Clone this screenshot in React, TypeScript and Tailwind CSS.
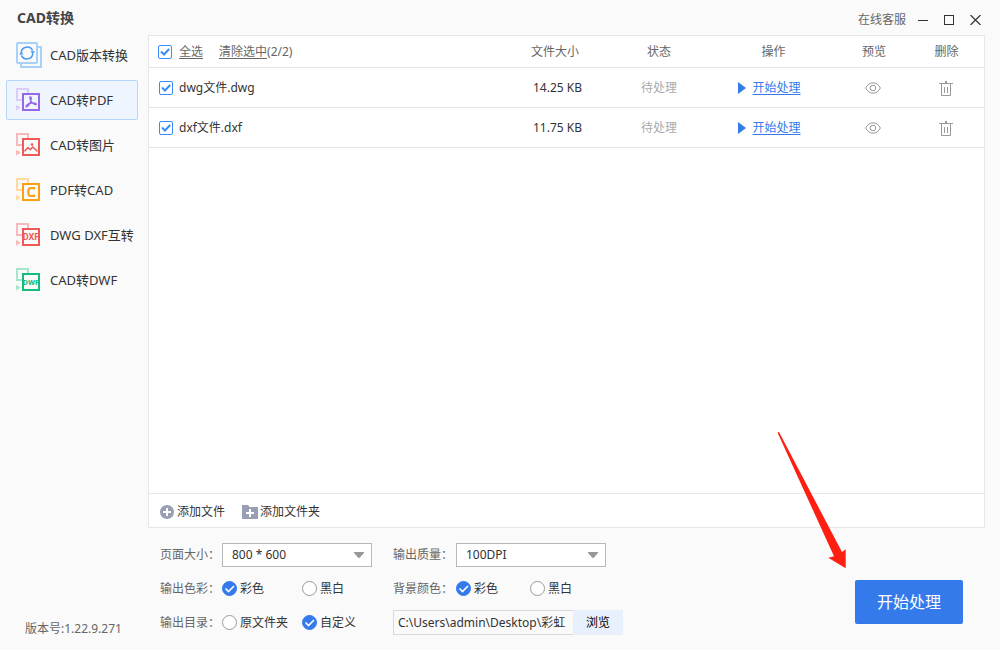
import { useState } from 'react'
import type { ReactNode } from 'react'

const files = [
  { name: 'dwg文件.dwg', size: '14.25 KB', status: '待处理' },
  { name: 'dxf文件.dxf', size: '11.75 KB', status: '待处理' },
]

// Icône à deux pages : page claire derrière, page foncée devant
function ConvertIcon({ back, front, children }: { back: string; front: string; children: ReactNode }) {
  return (
    <svg width="26" height="26" viewBox="0 0 26 26" fill="none" className="shrink-0">
      <path d="M6 13H1V2h11v4" stroke={back} strokeWidth="2" />
      <path d="M0 17.5l1.6 1.4h1.6V20l1.3.6-1.3.8v.8H1.6L0 24z" fill={back} />
      {children}
      <rect x="7" y="7" width="16" height="16" stroke={front} strokeWidth="2" />
    </svg>
  )
}

function VersionIcon() {
  return (
    <svg width="26" height="26" viewBox="0 0 26 26" fill="none" className="shrink-0">
      <path d="M22 5h3v20H5v-3" stroke="#a9d0f8" strokeWidth="2" strokeLinejoin="round" />
      <rect x="1" y="1" width="20" height="20" rx="1" stroke="#a9d0f8" strokeWidth="2" />
      <path d="M5.2 10.2a6 6 0 0 1 11.4-1.6M16.8 11.8a6 6 0 0 1-11.4 1.6" stroke="#4b98ee" strokeWidth="1.5" />
      <path d="M14.4 9.2h4.6l-2.200 3zM7.600 12.600H3l2.200-3z" fill="#4b98ee" />
    </svg>
  )
}

const menu = [
  { label: 'CAD版本转换', icon: <VersionIcon /> },
  {
    label: 'CAD转PDF',
    icon: (
      <ConvertIcon back="#dccdf7" front="#9468e6">
        <path d="M14.200 9.800c1.800 0 1 3.400 0 5.800-1 2.200-2.800 4.400-4 4.200-1-1.300 2.600-3.400 5.200-3.800 2.200-.3 5.200.2 5 1.200-.4 1-3.800-.6-5-2.400-1.100-1.700-2.200-5-1.200-5z" stroke="#9468e6" strokeWidth="1.300" />
      </ConvertIcon>
    ),
  },
  {
    label: 'CAD转图片',
    icon: (
      <ConvertIcon back="#f7b9b9" front="#ee5a58">
        <path d="M9 19.500v-1l3-3 2.300 2.200 2.400-2.700 4 3.500v1" stroke="#ee5a58" strokeWidth="1.500" />
        <circle cx="16" cy="12.500" r="1.300" fill="#ee5a58" />
      </ConvertIcon>
    ),
  },
  {
    label: 'PDF转CAD',
    icon: (
      <ConvertIcon back="#fddba0" front="#fb9f10">
        <path d="M18 12.500V11h-2.500c-2 0-3.200 1.200-3.200 3v2c0 1.800 1 3 2.700 3h3v-1.500" stroke="#fb9f10" strokeWidth="2" />
      </ConvertIcon>
    ),
  },
  {
    label: 'DWG DXF互转',
    icon: (
      <ConvertIcon back="#f7b9b9" front="#ee5a58">
        <text x="15" y="18" textAnchor="middle" fontSize="9" fontWeight="700" fill="#ee5a58" className="font-[Roboto,sans-serif]">DXF</text>
      </ConvertIcon>
    ),
  },
  {
    label: 'CAD转DWF',
    icon: (
      <ConvertIcon back="#a5e6cb" front="#12bd7c">
        <text x="15" y="18" textAnchor="middle" fontSize="8" fontWeight="700" fill="#12bd7c" className="font-[Roboto,sans-serif]">DWF</text>
      </ConvertIcon>
    ),
  },
]

function Checkbox({ label, checked, onChange }: { label: string; checked: boolean; onChange: () => void }) {
  return (
    <span className="grid size-[14px] shrink-0">
      <input
        type="checkbox"
        aria-label={label}
        checked={checked}
        onChange={onChange}
        className="peer col-start-1 row-start-1 size-[14px] appearance-none rounded-xs border border-[#3c8cf8] bg-white"
      />
      <svg viewBox="0 0 14 14" fill="none" className="pointer-events-none invisible col-start-1 row-start-1 size-[14px] peer-checked:visible">
        <path d="M3 6.500L6 9.500L11.200 4" stroke="#3c8cf8" strokeWidth="2" />
      </svg>
    </span>
  )
}

function Radio({ name, label, defaultChecked }: { name: string; label: string; defaultChecked?: boolean }) {
  return (
    <label className="flex items-center gap-[3px] whitespace-nowrap text-[#333]">
      <span className="grid size-[15px] shrink-0">
        <input
          type="radio"
          name={name}
          defaultChecked={defaultChecked}
          className="peer col-start-1 row-start-1 size-[15px] appearance-none rounded-full border border-[#999] bg-white checked:border-[#347aeb] checked:bg-[#347aeb]"
        />
        <svg viewBox="0 0 15 15" fill="none" className="pointer-events-none invisible col-start-1 row-start-1 size-[15px] peer-checked:visible">
          <path d="M3.500 7.500L6.500 10.500L12 5" stroke="#fff" strokeWidth="1.600" />
        </svg>
      </span>
      {label}
    </label>
  )
}

function Select({ id, options }: { id: string; options: string[] }) {
  return (
    <div className="grid w-[150px] items-center">
      <select id={id} className="col-start-1 row-start-1 h-6 appearance-none border border-[#b8b8b8] bg-white pl-[9px] text-[#333]">
        {options.map((o) => (
          <option key={o}>{o}</option>
        ))}
      </select>
      <svg width="10" height="6" viewBox="0 0 10 6" className="pointer-events-none col-start-1 row-start-1 mr-2 justify-self-end">
        <path d="M0 0h10v1L5.500 6h-1L0 1z" fill="#999" />
      </svg>
    </div>
  )
}

export default function App() {
  const [active, setActive] = useState('CAD转PDF')
  const [selected, setSelected] = useState<string[]>(files.map((f) => f.name))

  const toggle = (name: string) => {
    setSelected(selected.includes(name) ? selected.filter((n) => n !== name) : [...selected, name])
  }

  const allSelected = selected.length === files.length

  return (
    <div className="relative flex min-h-screen flex-col bg-[#fafafa] font-['Noto_Sans','Noto_Sans_CJK_SC',sans-serif] text-xs leading-4 text-[#666]">
      <header className="flex h-[35px] items-center justify-between pr-[19px] pl-[17px]">
        <h1 className="text-sm font-bold text-[#444]">CAD转换</h1>
        <div className="flex items-center pt-1">
          <a href="#service" className="mr-3">在线客服</a>
          <button aria-label="最小化" className="mr-4">
            <svg width="10" height="10" viewBox="0 0 10 10"><path d="M0 5.500h10" stroke="#333" /></svg>
          </button>
          <button aria-label="最大化" className="mr-4">
            <svg width="10" height="10" viewBox="0 0 10 10" fill="none"><rect x=".5" y=".5" width="9" height="9" stroke="#333" /></svg>
          </button>
          <button aria-label="关闭">
            <svg width="11" height="10" viewBox="0 0 11 10"><path d="M.5 0l10 10M10.500 0L.5 10" stroke="#333" strokeWidth="1.200" /></svg>
          </button>
        </div>
      </header>

      <div className="flex flex-1">
        <aside className="flex w-[148px] shrink-0 flex-col justify-between">
          <nav className="flex flex-col gap-[5px] pr-[10px] pl-[6px]">
            {menu.map((m) => (
              <button
                key={m.label}
                onClick={() => setActive(m.label)}
                className={`flex h-10 items-center gap-2 rounded-xs border pl-[9px] text-[13px] whitespace-nowrap text-[#333] ${
                  m.label === active ? 'border-[#b7d5fb] bg-[#eff5ff]' : 'border-transparent'
                }`}
              >
                {m.icon}
                {m.label}
              </button>
            ))}
          </nav>
          <p className="pb-[13px] pl-[25px]">版本号:1.22.9.271</p>
        </aside>

        <main className="flex min-w-0 flex-1 flex-col pr-[15px]">
          {/* Liste des fichiers */}
          <section className="flex flex-1 flex-col border border-[#e6e6e6] bg-white">
            <div className="flex-1">
              <table className="w-full table-fixed border-separate border-spacing-0 text-center">
                <thead>
                  <tr className="h-8 *:border-b *:border-[#e6e6e6]">
                    <th className="pl-[9px] font-normal">
                      <div className="flex items-center">
                        <Checkbox label="全部文件" checked={allSelected} onChange={() => setSelected(allSelected ? [] : files.map((f) => f.name))} />
                        <button onClick={() => setSelected(files.map((f) => f.name))} className="ml-[7px] underline underline-offset-2">全选</button>
                        <button onClick={() => setSelected([])} className="ml-4 underline underline-offset-2">清除选中</button>
                        <span>({selected.length}/{files.length})</span>
                      </div>
                    </th>
                    <th className="w-[110px] font-normal">文件大小</th>
                    <th className="w-[98px] font-normal">状态</th>
                    <th className="w-[131px] font-normal">操作</th>
                    <th className="w-[70px] font-normal">预览</th>
                    <th className="w-[75px] font-normal">删除</th>
                  </tr>
                </thead>
                <tbody>
                  {files.map((f) => (
                    <tr key={f.name} className="h-10 *:border-b *:border-[#e6e6e6]">
                      <td className="pl-[10px]">
                        <div className="flex items-center gap-[6px] text-[#333]">
                          <Checkbox label={f.name} checked={selected.includes(f.name)} onChange={() => toggle(f.name)} />
                          {f.name}
                        </div>
                      </td>
                      <td className="pl-[5px] text-[#333]">{f.size}</td>
                      <td className="text-[#aaa]">{f.status}</td>
                      <td className="pr-2">
                        <button className="inline-flex items-center gap-[6px] align-middle text-[#347aeb]">
                          <svg width="8" height="12" viewBox="0 0 8 12"><path d="M0 0l8 6-8 6z" fill="#347aeb" /></svg>
                          <span className="underline underline-offset-2">开始处理</span>
                        </button>
                      </td>
                      <td className="pr-[2px]">
                        <button aria-label="预览" className="align-middle">
                          <svg width="16" height="12" viewBox="0 0 16 12" fill="none" stroke="#999">
                            <path d="M.6 6C2.500 2.700 5 .8 8 .8S13.500 2.700 15.400 6C13.500 9.300 11 11.200 8 11.200S2.500 9.300.6 6z" />
                            <circle cx="8" cy="6" r="2.800" />
                          </svg>
                        </button>
                      </td>
                      <td className="pr-[2px]">
                        <button aria-label="删除" className="align-middle">
                          <svg width="14" height="16" viewBox="0 0 14 16" fill="none" stroke="#999">
                            <path d="M0 3.500h14M2.500 3.500v12h9v-12M5.500 7v6M8.500 7v6" />
                            <path d="M6 1h2v2H6z" fill="#999" stroke="none" />
                          </svg>
                        </button>
                      </td>
                    </tr>
                  ))}
                </tbody>
              </table>
            </div>
            <div className="flex h-[34px] items-center gap-[17px] border-t border-[#e6e6e6] pt-[2px] pl-[11px] text-[#333]">
              <button className="flex items-center gap-[3px]">
                <svg width="14" height="14" viewBox="0 0 14 14">
                  <circle cx="7" cy="7" r="7" fill="#989eb3" />
                  <path d="M7 3v8M3 7h8" stroke="#fff" strokeWidth="2" />
                </svg>
                添加文件
              </button>
              <button className="flex items-center gap-[2px]">
                <svg width="16" height="14" viewBox="0 0 16 14">
                  <path d="M0 0h6l1.500 2H16v12H0z" fill="#989eb3" />
                  <path d="M8 4v8M4 8h8" stroke="#fff" strokeWidth="2" />
                </svg>
                添加文件夹
              </button>
            </div>
          </section>

          {/* Options de sortie */}
          <section className="flex items-end justify-between pt-[15px] pr-[22px] pb-[15px] pl-3">
            <div className="grid grid-cols-[62px_171px_63px_167px] grid-rows-[24px_43px_25px] items-center">
              <label htmlFor="page-size">页面大小：</label>
              <Select id="page-size" options={['800 * 600', '1024 * 768']} />
              <label htmlFor="quality">输出质量：</label>
              <Select id="quality" options={['100DPI', '200DPI', '300DPI']} />

              <span>输出色彩：</span>
              <div className="grid grid-cols-[80px_auto]">
                <Radio name="color" label="彩色" defaultChecked />
                <Radio name="color" label="黑白" />
              </div>
              <span>背景颜色：</span>
              <div className="grid grid-cols-[74px_auto]">
                <Radio name="background" label="彩色" defaultChecked />
                <Radio name="background" label="黑白" />
              </div>

              <span>输出目录：</span>
              <div className="grid grid-cols-[80px_auto]">
                <Radio name="folder" label="原文件夹" />
                <Radio name="folder" label="自定义" defaultChecked />
              </div>
              <div className="col-span-2 flex h-[25px]">
                <input
                  aria-label="输出目录"
                  defaultValue="C:\Users\admin\Desktop\彩虹"
                  className="w-[180px] border border-r-0 border-[#d9d9d9] bg-[#fafafa] pl-1 text-[#333]"
                />
                <button className="w-[50px] bg-[#e8f0fd] text-black">浏览</button>
              </div>
            </div>
            <button className="mb-[11px] h-11 w-[108px] rounded-xs bg-[#347aeb] text-base text-white">开始处理</button>
          </section>
        </main>
      </div>

      <svg width="69" height="138" viewBox="0 0 69 138" className="pointer-events-none absolute right-[154px] bottom-[81px]">
        <path d="M.5 1.500L2 1l63 120 3.700-2.700V137.300L51.300 126.700l5.700-1.500z" fill="#ff1f12" />
      </svg>
    </div>
  )
}
